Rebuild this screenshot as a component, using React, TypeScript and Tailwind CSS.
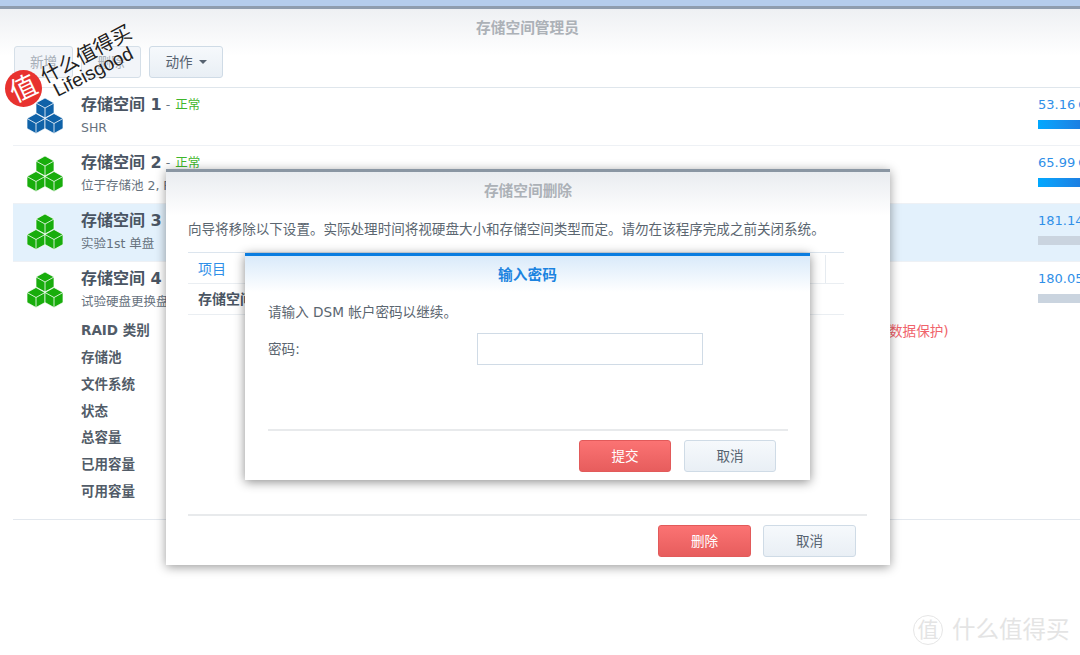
const FONT = "font-['DejaVu_Sans','Noto_Sans_CJK_SC',sans-serif]"

function Cubes({ color }: { color: string }) {
  const cube = (cx: number, t: number) => (
    <g key={`${cx}-${t}`}>
      <polygon
        points={`${cx},${t} ${cx + 9},${t + 5} ${cx + 9},${t + 15} ${cx},${t + 20} ${cx - 9},${t + 15} ${cx - 9},${t + 5}`}
        fill={color}
        stroke="#fff"
        strokeWidth="0.7"
      />
      <path
        d={`M${cx - 9} ${t + 5}L${cx} ${t + 10}L${cx + 9} ${t + 5}M${cx} ${t + 10}V${t + 20}`}
        stroke="#fff"
        strokeWidth="0.8"
        fill="none"
      />
    </g>
  )
  return (
    <svg width="36" height="36" viewBox="0 0 36 36" className="shrink-0">
      {cube(18, 0)}
      {cube(9, 15.5)}
      {cube(27, 15.5)}
    </svg>
  )
}

function VolumeRow({ n, sub, color, size, barClass, selected, ok, last }: {
  n: number; sub: string; color: string; size: string; barClass: string; selected?: boolean; ok?: boolean; last?: boolean
}) {
  return (
    <div className={`flex h-[58px] pl-[14px] ${last ? '' : 'border-b border-[#eef1f5]'} ${selected ? 'bg-[#e3f1fc]' : ''}`}>
      <div className="mt-[10px]"><Cubes color={color} /></div>
      <div className="ml-[18px] mt-[6px] flex-1">
        <div className="flex h-[22px] items-center">
          <span className="text-[16px] font-bold text-[#4a5563]">存储空间 {n}</span>
          {ok && <span className="ml-[4px] text-[12.5px] text-[#6a7785]">-</span>}
          {ok && <span className="ml-[5px] text-[12.5px] text-[#3fb62c]">正常</span>}
        </div>
        <div className="mt-[3px] text-[12.5px] text-[#66717d] whitespace-nowrap">{sub}</div>
      </div>
      <div className="w-[42px] shrink-0 overflow-hidden pt-[7px]">
        <div className="text-[13px] leading-[20px] text-[#2f8fe8] whitespace-nowrap [word-spacing:-1px]">{size}</div>
        <div className={`mt-[5px] h-[9px] w-full ${barClass}`} />
      </div>
    </div>
  )
}

function Btn({ label, primary, w }: { label: string; primary?: boolean; w: string }) {
  return (
    <div
      className={`flex h-[32px] items-center justify-center rounded-[3px] border text-[13.6px] ${w} ${
        primary
          ? 'border-[#e25a5a] bg-gradient-to-b from-[#fb7373] to-[#e75d5d] text-white'
          : 'border-[#cfdbe6] bg-gradient-to-b from-[#f6f9fc] to-[#e9eff5] text-[#566270]'
      }`}
    >
      {label}
    </div>
  )
}

const DETAILS = ['RAID 类别', '存储池', '文件系统', '状态', '总容量', '已用容量', '可用容量']

export default function App() {
  return (
    <div className={`relative h-[655px] w-[1080px] overflow-hidden bg-white ${FONT}`}>
      <div className="h-[6px] bg-[#b5cdec]" />
      <div className="h-[3px] bg-[#8f9dae]" />
      <div className="h-[78px] bg-gradient-to-b from-[#eef0f3] to-white to-60%">
        <div className="pr-[25px] pt-[10px] text-center text-[14.7px] font-bold leading-[18px] text-[#acb1b7]">存储空间管理员</div>
        <div className="mt-[9px] flex gap-[8px] pl-[14px]">
          <div className="flex h-[32px] w-[59px] items-center justify-center rounded-[3px] border border-[#d5dfe8] bg-[#f2f5f9] text-[13.6px] text-[#a5adb6]">新增</div>
          <div className="flex h-[32px] w-[60px] items-center justify-center rounded-[3px] border border-[#d5dfe8] bg-[#f2f5f9] text-[13.6px] text-[#a5adb6]">删除</div>
          <div className="flex h-[32px] w-[74px] items-center justify-center gap-[6px] rounded-[3px] border border-[#cfdbe6] bg-gradient-to-b from-[#f6f9fc] to-[#e9eff5] text-[13.6px] text-[#566270]">
            动作
            <span className="h-0 w-0 border-x-[4px] border-t-[4px] border-x-transparent border-t-[#566270]" />
          </div>
        </div>
      </div>

      <div className="ml-[13px] border-t border-[#dfe6ec]">
        <VolumeRow n={1} ok sub="SHR" color="#0f62a8" size="53.16 GB" barClass="bg-gradient-to-r from-[#00a8ff] to-[#1c7fe2]" />
        <VolumeRow n={2} ok sub="位于存储池 2, RAID" color="#18ad0c" size="65.99 GB" barClass="bg-gradient-to-r from-[#00a8ff] to-[#1c7fe2]" />
        <VolumeRow n={3} selected sub="实验1st 单盘" color="#18ad0c" size="181.14 GB" barClass="bg-[#cad4df]" />
        <VolumeRow n={4} last sub="试验硬盘更换盘" color="#18ad0c" size="180.05 GB" barClass="bg-[#cad4df]" />
        <div className="-mt-[4px] h-[204px] border-b border-[#e3e8ee] pl-[68px] pt-[1px]">
          {DETAILS.map(d => (
            <div key={d} className="flex h-[26.8px] items-center text-[13.5px] font-bold text-[#525c68]">{d}</div>
          ))}
        </div>
      </div>

      {/* text of the detail pane that shows to the right of the dialog */}
      <div className="absolute left-[889px] top-[322px] text-[13.6px] leading-[18px] text-[#f0636b]">数据保护)</div>

      {/* delete dialog */}
      <div className="absolute left-[166px] top-[169px] flex h-[396px] w-[724px] flex-col border-t-[3px] border-[#8a96a3] bg-white shadow-[0_2px_10px_rgba(0,0,0,0.4)]">
        <div className="h-[44px] bg-gradient-to-b from-[#e9ecf0] to-white pt-[10px] text-center text-[14.7px] font-bold leading-[18px] text-[#acb1b7]">存储空间删除</div>
        <p className="mt-[4px] pl-[22px] text-[13.55px] leading-[18px] text-[#5b6670] whitespace-nowrap">
          向导将移除以下设置。实际处理时间将视硬盘大小和存储空间类型而定。请勿在该程序完成之前关闭系统。
        </p>
        <div className="ml-[22px] mt-[14px] w-[656px] border-t border-[#dce5ee]">
          <div className="flex h-[31px] items-center justify-between border-b border-[#eaeef2] pl-[10px] pt-[2px]">
            <span className="text-[14px] text-[#2f8fe8]">项目</span>
            <span className="mr-[18px] h-full w-px bg-[#e6ebf0]" />
          </div>
          <div className="flex h-[31px] items-center border-b border-[#eaeef2] pl-[10px] text-[14px] font-bold text-[#4a5563]">存储空间</div>
        </div>
        <div className="flex-1" />
        <div className="ml-[22px] h-[2px] w-[679px] bg-[#e8eaec]" />
        <div className="flex justify-end gap-[12px] pb-[8px] pr-[34px] pt-[9px]">
          <Btn label="删除" primary w="w-[93px]" />
          <Btn label="取消" w="w-[93px]" />
        </div>
      </div>

      {/* password dialog */}
      <div className="absolute left-[245px] top-[253px] flex h-[227px] w-[565px] flex-col border-t-[3px] border-[#0a7de0] bg-white shadow-[0_2px_10px_rgba(0,0,0,0.45)]">
        <div className="h-[36px] bg-gradient-to-b from-[#d9eafa] to-white pt-[10px] text-center text-[14.7px] font-bold leading-[18px] text-[#1b83e0]">输入密码</div>
        <p className="mt-[11px] pl-[23px] text-[13.6px] leading-[18px] text-[#5b6670]">请输入 DSM 帐户密码以继续。</p>
        <div className="mt-[12px] flex items-center pl-[23px]">
          <span className="w-[209px] text-[13.6px] text-[#5b6670]">密码:</span>
          <div className="h-[32px] w-[226px] border border-[#d0dbe6] bg-white" />
        </div>
        <div className="flex-1" />
        <div className="ml-[23px] h-[2px] w-[520px] bg-[#e8eaec]" />
        <div className="flex justify-end gap-[13px] pb-[8px] pr-[34px] pt-[9px]">
          <Btn label="提交" primary w="w-[92px]" />
          <Btn label="取消" w="w-[92px]" />
        </div>
      </div>

      {/* watermark, top left */}
      <div className="absolute left-[5px] top-[70px] flex h-[37px] w-[37px] items-center justify-center rounded-full bg-[#e8322f] text-[27px] text-white">
        <span className="-rotate-[25deg] leading-none">值</span>
      </div>
      <div className="absolute left-[36px] top-[42px] -rotate-[28deg] whitespace-nowrap text-[20px] leading-[24px] text-[#222] [text-shadow:0_0_2px_#fff]">什么值得买</div>
      <div className="absolute left-[50px] top-[61px] -rotate-[27deg] whitespace-nowrap font-['Liberation_Sans',sans-serif] text-[19px] leading-[22px] text-[#222] [text-shadow:0_0_2px_#fff]">Lifeisgood</div>

      {/* watermark, bottom right */}
      <div className="absolute left-[913px] top-[615px] flex items-center gap-[9px] text-[#e4e4e4]">
        <span className="flex h-[30px] w-[30px] items-center justify-center rounded-full border-[1.5px] border-[#e6e6e6] text-[21px] leading-none">值</span>
        <span className="text-[23.5px] leading-[30px]">什么值得买</span>
      </div>
    </div>
  )
}
